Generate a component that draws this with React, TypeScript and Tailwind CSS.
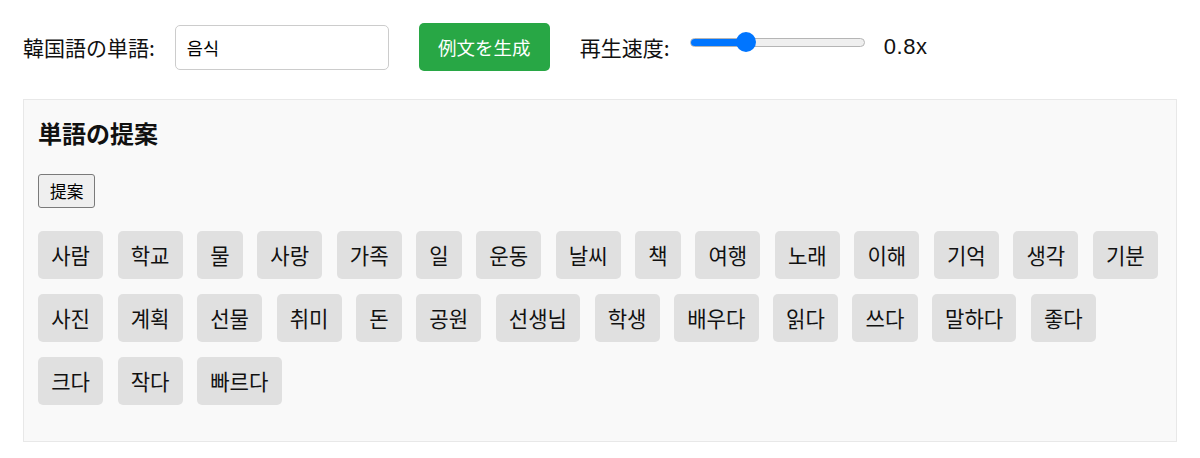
import React from "react";

const words = [
  "사람", "학교", "물", "사랑", "가족", "일", "운동", "날씨", "책", "여행", "노래", "이해", "기억", "생각", "기분",
  "사진", "계획", "선물", "취미", "돈", "공원", "선생님", "학생", "배우다", "읽다", "쓰다", "말하다", "좋다",
  "크다", "작다", "빠르다",
];

const jp = "font-['Noto_Sans_CJK_JP',sans-serif]";

const App = () => {
  const speed = 0.8;
  const min = 0.5;
  const max = 1.5;
  const pct = (speed - min) / (max - min);

  return (
    <div className={`min-h-screen bg-white text-[#111] ${jp}`}>
      {/* controls */}
      <div className="flex items-center pt-[23px] px-[23px] h-[71px]">
        <label className="text-[21px] leading-[28px] mr-[20px]">韓国語の単語:</label>
        <input
          defaultValue="음식"
          className="w-[214px] h-[45px] border border-[#cccccc] rounded-[5px] px-[11px] text-[17.5px] text-black bg-white outline-none font-['Noto_Sans_CJK_KR',sans-serif]"
        />
        <button className="ml-[30px] h-[48px] w-[131px] rounded-[5px] bg-[#28a745] text-white text-[18.5px] leading-[24px]">
          例文を生成
        </button>
        <label className="ml-[30px] text-[21px] leading-[28px]">再生速度:</label>
        <div className="ml-[20px] mb-[10px] relative w-[175px] h-[20px] flex items-center">
          <div className="w-full h-[9px] rounded-full border border-[#b5b5b5] bg-[#efefef] overflow-hidden">
            <div className="h-full bg-[#0075ff]" style={{ width: `${10 + pct * 155}px` }} />
          </div>
          <div
            className="absolute top-0 w-[20px] h-[20px] rounded-full bg-[#0075ff]"
            style={{ left: `${pct * 155}px` }}
          />
        </div>
        <span className="ml-[19px] text-[22px] leading-[28px] tracking-[0.6px] font-['Liberation_Sans',sans-serif]">
          {speed}x
        </span>
      </div>

      {/* suggestions panel */}
      <div className="mt-[28px] mx-[23px] border border-[#e8e8e8] bg-[#f9f9f9] pt-[15px] px-[14px] pb-[36px]">
        <h3 className="text-[24px] leading-[36px] font-bold">単語の提案</h3>
        <button className="mt-[23px] h-[34px] px-[11px] border border-[#7a7a7a] rounded-[3px] bg-[#efefef] text-[16.7px] leading-[20px] text-black">
          提案
        </button>
        <div className="mt-[23px] flex flex-wrap gap-x-[14.4px] gap-y-[15px] font-['Noto_Sans_CJK_KR',sans-serif]">
          {words.map((w) => (
            <button
              key={w}
              className="h-[48px] px-[13.15px] rounded-[5px] bg-[#e0e0e0] text-[21.1px] leading-[28px] text-[#111]"
            >
              {w}
            </button>
          ))}
        </div>
      </div>
    </div>
  );
};

export default App;
